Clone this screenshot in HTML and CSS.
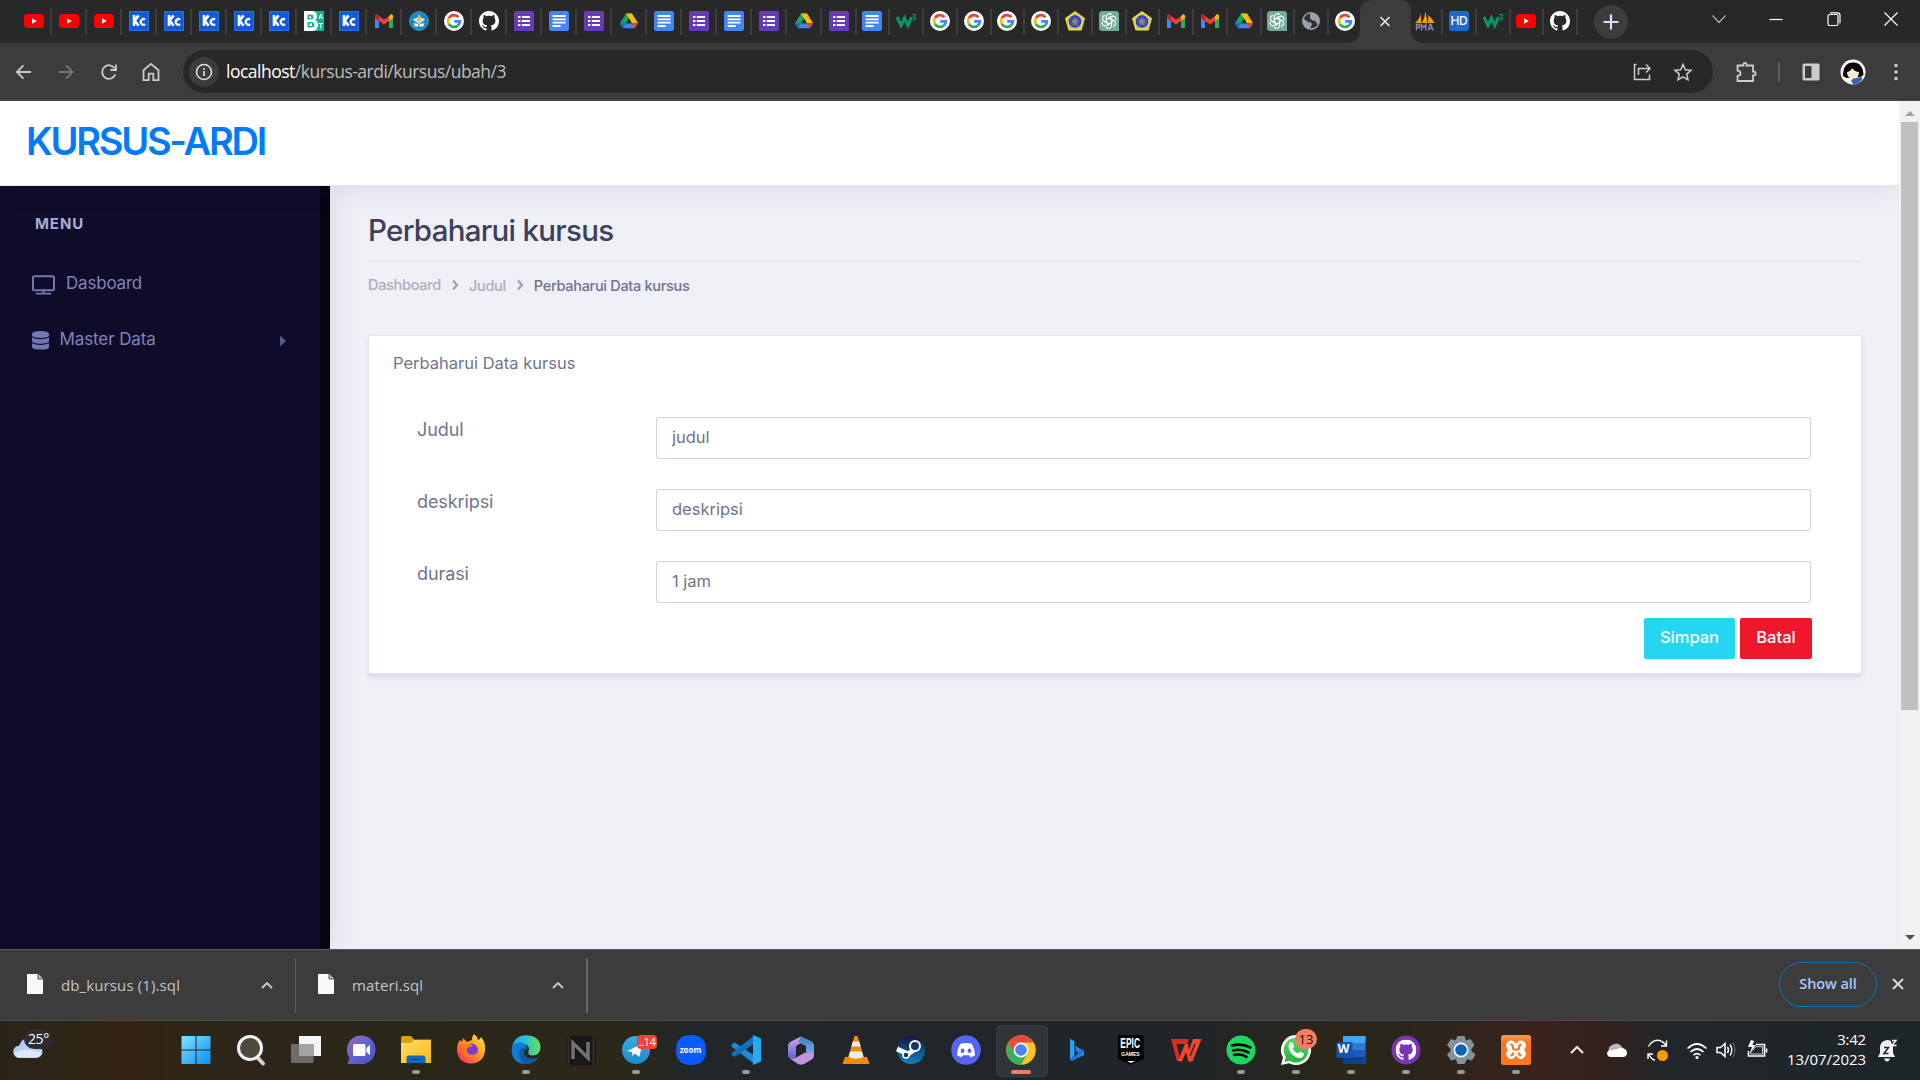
FILE: index.html
```html
<!DOCTYPE html>
<html lang="id">
<head>
<meta charset="utf-8">
<title>Kursus Ardi</title>
<link rel="stylesheet" href="styles.css">
</head>
<body>
<svg class="defs" aria-hidden="true">
  <defs>
    <linearGradient id="gWin" x1="0" y1="0" x2="1" y2="1"><stop offset="0" stop-color="#7fe3ff"/><stop offset="1" stop-color="#0a8ff5"/></linearGradient>
    <linearGradient id="gChat" x1="0" y1="0" x2="1" y2="1"><stop offset="0" stop-color="#9a6cb0"/><stop offset=".5" stop-color="#5f62d0"/><stop offset="1" stop-color="#5054c4"/></linearGradient>
    <linearGradient id="gFolder" x1="0" y1="0" x2="1" y2="1"><stop offset="0" stop-color="#ffdc6e"/><stop offset="1" stop-color="#fdb90e"/></linearGradient>
    <linearGradient id="gFox" x1="1" y1="0" x2="0" y2="1"><stop offset="0" stop-color="#fff14a"/><stop offset=".45" stop-color="#ff9a1c"/><stop offset="1" stop-color="#ff1f6b"/></linearGradient>
    <linearGradient id="gEdge" x1="0" y1="0" x2="1" y2="0"><stop offset="0" stop-color="#1fa0e8"/><stop offset=".5" stop-color="#2cc3d2"/><stop offset="1" stop-color="#6be04b"/></linearGradient>
    <linearGradient id="g365a" x1="0" y1="0" x2="0" y2="1"><stop offset="0" stop-color="#d8a5e8"/><stop offset="1" stop-color="#5a62c8"/></linearGradient>
    <linearGradient id="g365b" x1="0" y1="0" x2="0" y2="1"><stop offset="0" stop-color="#3d7fb8"/><stop offset="1" stop-color="#7db2f0"/></linearGradient>
    <linearGradient id="gSteam" x1="0" y1="0" x2="0" y2="1"><stop offset="0" stop-color="#14143c"/><stop offset="1" stop-color="#1083bf"/></linearGradient>
    <linearGradient id="gBing" x1="0" y1="0" x2="1" y2="1"><stop offset="0" stop-color="#35a4f5"/><stop offset=".6" stop-color="#1d6fe0"/><stop offset="1" stop-color="#43d6e8"/></linearGradient>
    <linearGradient id="gTg" x1="0" y1="0" x2="0" y2="1"><stop offset="0" stop-color="#37aee2"/><stop offset="1" stop-color="#1b8bc8"/></linearGradient>
    <linearGradient id="gXa" x1="0" y1="0" x2="0" y2="1"><stop offset="0" stop-color="#fb9a4c"/><stop offset=".3" stop-color="#f9731a"/><stop offset="1" stop-color="#fb7a24"/></linearGradient>
    <linearGradient id="gWa" x1="0" y1="0" x2="0" y2="1"><stop offset="0" stop-color="#60d66a"/><stop offset="1" stop-color="#22b43a"/></linearGradient>
  </defs>
  <symbol id="yt" viewBox="0 0 20 20"><rect y="3" width="20" height="14" rx="3.6" fill="#f00"/><path d="M8 7.2v5.6l4.8-2.8z" fill="#fff"/></symbol>
  <symbol id="kc" viewBox="0 0 20 20"><rect width="20" height="20" fill="#2a6fe8"/><rect x="1" y="1" width="18" height="18" fill="#0f5bd8"/><path d="M5 4v11M9.6 4.4 5.6 9.6l4 5.2" fill="none" stroke="#fff" stroke-width="2.6"/><path d="M16 8.6a2.6 2.9 0 1 0 0 4.6" fill="none" stroke="#fff" stroke-width="2.3"/></symbol>
  <symbol id="bat" viewBox="0 0 20 20"><rect width="20" height="20" fill="#12b398"/><path d="M0 0h9q4 1 4 5 0 3-2 4 3 1 3 5 0 5-5 6H0z" fill="#fff"/><path d="M3.500 3.500h3.500q2.500 0 2.500 2.500T7 8.500H3.500zM3.500 11h4q3 0 3 2.700t-3 2.800h-4z" fill="#12b398"/><path d="M5.500 5h1.500v2.500H5.500zm0 7.500H8v2.500H5.500z" fill="#fff"/><path d="M15 8l1.700-5L18.400 8M15.500 6.500h2.400M14.800 12.500h4M16.800 12.500v5" fill="none" stroke="#fff"/></symbol>
  <symbol id="gmail" viewBox="0 0 20 20"><path d="M1 5.500V17h4V9.500z" fill="#4285f4"/><path d="M19 5.500V17h-4V9.500z" fill="#34a853"/><path d="M15 5.200V10l4-3V5q0-2.400-2.600-1.600z" fill="#fbbc04"/><path d="M1 5v2l4 3 5 3.600 5-3.600V5l-5 3.800L3.600 3.800Q1 2.500 1 5z" fill="#ea4335"/><path d="M1 5q0-2.500 2.600-1.300L5 5v5L1 7z" fill="#c5221f"/></symbol>
  <symbol id="tut" viewBox="0 0 20 20"><circle cx="10" cy="10" r="9.300" fill="#1487c4" stroke="#3fa0d0"/><path d="M10 3l1.500 3.500L16 8q-1 3-4 3.500L10 13l-2-1.500Q5 11 4 8l4.500-1.500z" fill="#cfe3ee"/><path d="M10 3l1.500 4v3.500h-3V7z" fill="#e2c03a"/><path d="M4.500 12.200l4.500.6 1 .8 1-.8 4.500-.6-1.200 3.300H5.700z" fill="#fff"/><path d="M10 13v3.500" stroke="#1d6fa0"/></symbol>
  <symbol id="goog" viewBox="0 0 20 20"><circle cx="10" cy="10" r="10" fill="#fff"/><g fill="none" stroke-width="2.700"><path d="M14.500 6.200A5.900 5.900 0 0 0 4.900 7.100" stroke="#ea4335"/><path d="M4.900 7.100a5.900 5.900 0 0 0 0 5.900" stroke="#fbbc05"/><path d="M4.900 13a5.900 5.900 0 0 0 9 1.400" stroke="#34a853"/><path d="M13.900 14.400A5.900 5.900 0 0 0 15.900 10.300H10.200" stroke="#4285f4"/></g></symbol>
  <symbol id="gh" viewBox="0 0 16 16"><path fill="currentColor" d="M8 0C3.580 0 0 3.580 0 8c0 3.540 2.290 6.530 5.470 7.590.4.070.55-.17.55-.38 0-.19-.01-.82-.01-1.490-2.010.37-2.530-.49-2.690-.94-.09-.23-.48-.94-.82-1.130-.28-.15-.68-.52-.01-.53.63-.01 1.080.58 1.230.82.720 1.210 1.870.87 2.330.66.070-.52.280-.87.510-1.070-1.780-.2-3.640-.89-3.640-3.950 0-.87.310-1.590.820-2.150-.08-.2-.36-1.020.080-2.120 0 0 .67-.21 2.200.820.640-.18 1.320-.27 2-.27s1.360.090 2 .270c1.530-1.040 2.200-.82 2.200-.82.440 1.100.160 1.920.080 2.120.510.560.820 1.270.820 2.150 0 3.070-1.870 3.750-3.650 3.950.290.250.540.730.540 1.480 0 1.070-.01 1.930-.01 2.200 0 .21.150.46.550.38A8.013 8.013 0 0 0 16 8c0-4.420-3.580-8-8-8z"/></symbol>
  <symbol id="forms" viewBox="0 0 20 20"><rect width="20" height="20" rx="1.500" fill="#673ab7"/><path d="M4 6h2.400M4 10h2.400M4 14h2.400M7.800 6H16M7.800 10H16M7.800 14H16" stroke="#fff" stroke-width="1.800"/></symbol>
  <symbol id="docs" viewBox="0 0 20 20"><rect width="20" height="20" rx="2.200" fill="#4285f4"/><path d="M3.600 5h13M3.600 8.400h13M3.600 11.700h13M3.600 15h8" stroke="#fff" stroke-width="1.800"/></symbol>
  <symbol id="drive" viewBox="0 0 20 20"><path d="M7 2.500h6L7 13l-3 4-3-4.800z" fill="#11a861"/><path d="M7 2.500h6L10 8z" fill="#188038"/><path d="M7 2.500h6l6 9.700h-6.300z" fill="#ffba00"/><path d="M1 12.200h6L4 17.300z" fill="#1967d2"/><path d="M7 12.200h6l3 5.100H4z" fill="#4285f4"/><path d="M12.700 12.200H19l-3 5.100z" fill="#ea4335"/><path d="M10 7.400l2.800 4.800H7.200z" fill="#282828"/></symbol>
  <symbol id="w3" viewBox="0 0 20 20"><path d="M1 6l4 8.500L8.500 7l3.300 7.500L15.500 6" fill="none" stroke="#059862" stroke-width="3"/><path d="M16.500 3.500h3L17.800 6q2 0 1.700 1.700T16.500 9" fill="none" stroke="#059862" stroke-width="1.100"/></symbol>
  <symbol id="badge" viewBox="0 0 20 20"><path d="M10 0l10 7.300L16.500 19.500h-13L0 7.300z" fill="#ece21c"/><path d="M10 2.300l8 5.800-2.800 9.400H4.800L2 8.100z" fill="#b4b6c6"/><circle cx="10" cy="10.500" r="5.400" fill="#8f94ca" stroke="#1c2ad0" stroke-width="1.500"/><circle cx="10" cy="10.500" r="3.600" fill="#8b8377" stroke="#2c3f9a" stroke-width="1.200"/><path d="M7.500 13.500h5" stroke="#3c8f4a" stroke-width="1.600"/></symbol>
  <symbol id="gpt" viewBox="0 0 20 20"><path d="M3.500 0h13Q20 0 20 3.500V20H3.500Q0 20 0 16.500v-13Q0 0 3.500 0z" fill="#74aa9c"/><g fill="none" stroke="#fff" stroke-width="1.100"><g id="petal"><path d="M7.400 11.500V5.800a3.100 3.100 0 0 1 5.500-2"/><path d="M7.600 8.200l4.600-2.600"/></g><use href="#petal" transform="rotate(60 10 10)"/><use href="#petal" transform="rotate(120 10 10)"/><use href="#petal" transform="rotate(180 10 10)"/><use href="#petal" transform="rotate(240 10 10)"/><use href="#petal" transform="rotate(300 10 10)"/></g></symbol>
  <symbol id="globe" viewBox="0 0 20 20"><circle cx="10" cy="10" r="9" fill="#9aa0a6"/><path d="M9 2.600Q4 3.500 3 8l4 3 3 .5 1 2-2 3.700q5 .8 7.500-3.700l-2-3.500-4-1-1-2 3-1.500z" fill="#303134"/><path d="M9 3l4 1-1 2.500L9 8z" fill="#9aa0a6"/></symbol>
  <symbol id="pma" viewBox="0 0 20 20"><path d="M0 12Q5 8 5.500 2L6.500 12zM7 12Q10 6 10.500 0L12.500 12zM13 12l.5-8q4 4 6 8z" fill="#f89c0e"/><path d="M1.500 19.500v-6h3v3h-3M6.500 19.500v-6l2.200 3 2.200-3v6M13.500 19.500l1.500-6h1l2 6M14 17.500h3" fill="none" stroke="#8286b0" stroke-width="1.400"/></symbol>
  <symbol id="sep" viewBox="0 0 12 12"><path d="M4 1.500l4 4.500-4 4.500" fill="none" stroke="currentColor" stroke-width="2.300"/></symbol>
</svg>

<div class="tabstrip">
  <div class="tab"><svg><use href="#yt"/></svg></div><div class="tab"><svg><use href="#yt"/></svg></div><div class="tab"><svg><use href="#yt"/></svg></div>
  <div class="tab"><svg><use href="#kc"/></svg></div><div class="tab"><svg><use href="#kc"/></svg></div><div class="tab"><svg><use href="#kc"/></svg></div><div class="tab"><svg><use href="#kc"/></svg></div><div class="tab"><svg><use href="#kc"/></svg></div>
  <div class="tab"><svg><use href="#bat"/></svg></div><div class="tab"><svg><use href="#kc"/></svg></div><div class="tab"><svg><use href="#gmail"/></svg></div><div class="tab"><svg><use href="#tut"/></svg></div>
  <div class="tab"><svg><use href="#goog"/></svg></div><div class="tab"><svg><use href="#gh"/></svg></div><div class="tab"><svg><use href="#forms"/></svg></div><div class="tab"><svg><use href="#docs"/></svg></div>
  <div class="tab"><svg><use href="#forms"/></svg></div><div class="tab"><svg><use href="#drive"/></svg></div><div class="tab"><svg><use href="#docs"/></svg></div><div class="tab"><svg><use href="#forms"/></svg></div>
  <div class="tab"><svg><use href="#docs"/></svg></div><div class="tab"><svg><use href="#forms"/></svg></div><div class="tab"><svg><use href="#drive"/></svg></div><div class="tab"><svg><use href="#forms"/></svg></div>
  <div class="tab narrow"><svg><use href="#docs"/></svg></div><div class="tab narrow"><svg><use href="#w3"/></svg></div>
  <div class="tab narrow"><svg><use href="#goog"/></svg></div><div class="tab narrow"><svg><use href="#goog"/></svg></div><div class="tab narrow"><svg><use href="#goog"/></svg></div><div class="tab narrow"><svg><use href="#goog"/></svg></div>
  <div class="tab narrow"><svg><use href="#badge"/></svg></div><div class="tab narrow"><svg><use href="#gpt"/></svg></div><div class="tab narrow"><svg><use href="#badge"/></svg></div>
  <div class="tab narrow"><svg><use href="#gmail"/></svg></div><div class="tab narrow"><svg><use href="#gmail"/></svg></div><div class="tab narrow"><svg><use href="#drive"/></svg></div>
  <div class="tab narrow"><svg><use href="#gpt"/></svg></div><div class="tab narrow"><svg><use href="#globe"/></svg></div><div class="tab narrow bare"><svg><use href="#goog"/></svg></div>
  <div class="tab-active"><svg class="tab-shape" viewBox="0 0 82 43"><path d="M0 43q15 0 15-13V11Q15 0 27 0h28q11 0 11 11v19q0 13 16 13z" fill="#3c3c3c"/><path d="M35.500 17l9 9M44.500 17l-9 9" stroke="#e8e8e8" stroke-width="1.700"/></svg></div>
  <div class="tab narrow"><svg><use href="#pma"/></svg></div>
  <div class="tab narrow"><span class="hd">HD</span></div>
  <div class="tab narrow"><svg><use href="#w3"/></svg></div><div class="tab narrow"><svg><use href="#yt"/></svg></div><div class="tab narrow"><svg><use href="#gh"/></svg></div>
  <div class="newtab"><svg viewBox="0 0 34 34"><path d="M17 9.500v15M9.500 17h15" stroke="#d6e2fb" stroke-width="2.200"/></svg></div>
  <div class="wincontrols">
    <svg viewBox="0 0 20 20"><path d="M3.500 6.500l6.500 7 6.500-7" fill="none" stroke="#ddd" stroke-width="1.100"/></svg>
    <svg viewBox="0 0 20 20"><path d="M3.500 10.500h13" stroke="#fff" stroke-width="1.200"/></svg>
    <svg viewBox="0 0 20 20"><g fill="none" stroke="#fff" stroke-width="1.200"><rect x="4" y="5.500" width="10" height="11" rx="1.500"/><path d="M6 3.800h7.500q2.500 0 2.500 2.500v8"/></g></svg>
    <svg viewBox="0 0 20 20"><path d="M3.500 3.500l13 13M16.500 3.500l-13 13" stroke="#fff" stroke-width="1.200"/></svg>
  </div>
</div>

<div class="toolbar">
  <div class="navbtns">
    <svg viewBox="0 0 20 20" class="lit"><path d="M18 10H4M10.500 3.300 3.800 10l6.700 6.700"/></svg>
    <svg viewBox="0 0 20 20" class="dim"><path d="M2.500 10h14M10 3.300l6.700 6.700-6.700 6.700"/></svg>
    <svg viewBox="0 0 20 20" class="lit"><path d="M16.300 12.500a6.800 6.800 0 1 1-.5-6M17 2.500V8h-5.500"/></svg>
    <svg viewBox="0 0 20 20" class="lit"><path d="M2.500 8.200 10 1.900l7.500 6.300v10h-5.200v-6.500H7.700v6.500H2.500z"/></svg>
  </div>
  <div class="omnibox">
    <span class="info"><svg viewBox="0 0 20 20"><circle cx="10" cy="10" r="7.500" fill="none" stroke="#ddd" stroke-width="1.600"/><path d="M10 9v5M10 6v1.800" stroke="#ddd" stroke-width="1.700"/></svg></span>
    <span class="url"><b>localhost</b>/kursus-ardi/kursus/ubah/3</span>
    <span class="omni-actions">
      <svg viewBox="0 0 20 20" class="lit"><path d="M4.500 2.500H2.500v15h15v-5M6.500 13V6.500h11M14 2.500l4 4-4 4" stroke-width="1.500"/></svg>
      <svg viewBox="0 0 20 20" class="lit"><path d="M10 2.500l2.300 5.300 5.700.5-4.300 3.800 1.300 5.700-5-3-5 3 1.300-5.700L2 8.300l5.700-.5z" stroke-width="1.500"/></svg>
    </span>
  </div>
  <div class="toolicons">
    <svg viewBox="0 0 22 22" class="lit puzzle"><path d="M2.500 4.500h6q-.5-2.700 1.500-2.700t1.500 2.700h6.500v6q2.700 0 2.700 2t-2.700 2v5.500H2.500v-5q3-.3 3-2.700t-3-2.700z"/></svg>
    <i class="tooldiv"></i>
    <svg viewBox="0 0 20 20" class="panel"><rect x="1.500" y="1.500" width="17" height="17" rx="1.500" fill="#ccc"/><path d="M4 4h6.500v12H4z" fill="#3c3c3c"/></svg>
    <svg viewBox="0 0 26 26" class="avatar"><circle cx="13" cy="13" r="12.500" fill="#fff"/><path d="M3 17q0-13.500 10-13.500T23.500 16l-3 2-14 1z" fill="#050505"/><path d="M7 13q4-1 5-4 3 4 7 4 0 6.500-6 6.500T7 13z" fill="#f3ead2"/><path d="M13 19.500q5 0 8-2l1.500 2.500Q19 25 13.500 25.500L11 22z" fill="#3c63b0"/></svg>
    <svg viewBox="0 0 20 20" class="dots"><path d="M10 3.500v.01M10 10v.01M10 16.500v.01" stroke="#ccc" stroke-width="3.600" stroke-linecap="round"/></svg>
  </div>
</div>

<div class="viewport">
  <div class="site">
    <header class="header"><a class="brand">KURSUS-ARDI</a></header>
    <div class="site-body">
      <nav class="sidebar">
        <div class="menu-label">MENU</div>
        <a class="menu-item das"><svg viewBox="0 0 23 20" class="ic-tv"><rect x="1" y="1.200" width="21" height="14" rx="1.500" fill="none" stroke="#7476b0" stroke-width="2"/><path d="M11.500 15v3M4.500 18.600h14" stroke="#7476b0" stroke-width="1.900" stroke-linecap="round"/></svg><span>Dasboard</span></a>
        <a class="menu-item"><svg viewBox="0 0 17 19" class="ic-db"><g fill="#7476b0"><path d="M0 3q0-3 8.500-3T17 3v1.300q0 2.700-8.500 2.700T0 4.300z"/><path d="M0 6.500q3 1.800 8.500 1.800T17 6.500v3.600q0 2.700-8.500 2.700T0 10.100z"/><path d="M0 12.300q3 1.800 8.500 1.800t8.500-1.800v3.600q0 2.700-8.500 2.700T0 15.900z"/></g></svg><span>Master Data</span><svg viewBox="0 0 6 12" class="caret"><path d="M0 .5v11L6 6z" fill="#585a90"/></svg></a>
      </nav>
      <main class="content">
        <h2 class="title">Perbaharui kursus</h2>
        <div class="crumbs"><span>Dashboard</span><svg><use href="#sep"/></svg><span class="step">Judul</span><svg><use href="#sep"/></svg><span class="step current">Perbaharui Data kursus</span></div>
        <section class="card">
          <h5 class="card-title">Perbaharui Data kursus</h5>
          <form class="form">
            <div class="row"><label>Judul</label><input type="text" value="judul"></div>
            <div class="row"><label>deskripsi</label><input type="text" value="deskripsi"></div>
            <div class="row"><label>durasi</label><input type="text" value="1 jam"></div>
            <div class="actions"><button type="button" class="btn save">Simpan</button><button type="button" class="btn cancel">Batal</button></div>
          </form>
        </section>
      </main>
    </div>
  </div>
  <div class="scrollbar"><i class="arrow up"></i><i class="thumb"></i><i class="arrow down"></i></div>
</div>

<div class="downloads">
  <div class="dl"><svg class="file" viewBox="0 0 16 20"><path d="M0 0h11l5 5v15H0z" fill="#fafafa"/><path d="M11 0v5h5" fill="#bbb" stroke="#555"/></svg><span>db_kursus (1).sql</span><svg class="chev" viewBox="0 0 12 8"><path d="M1 7l5-5 5 5"/></svg></div>
  <div class="dl last"><svg class="file" viewBox="0 0 16 20"><path d="M0 0h11l5 5v15H0z" fill="#fafafa"/><path d="M11 0v5h5" fill="#bbb" stroke="#555"/></svg><span>materi.sql</span><svg class="chev" viewBox="0 0 12 8"><path d="M1 7l5-5 5 5"/></svg></div>
  <button class="showall">Show all</button>
  <svg class="closedl" viewBox="0 0 12 12"><path d="M1 1l10 10M11 1L1 11" stroke="#ddd" stroke-width="1.900"/></svg>
</div>

<div class="taskbar">
  <div class="weather"><svg viewBox="0 0 32 24"><path d="M7 23a6.500 6.500 0 0 1-.5-13Q9 2 16 2q8 0 9 8a6.500 6.500 0 0 1 0 13z" fill="#b5ccf6"/><path d="M7 23a6.500 6.500 0 0 1-6-5q7-5 15-4t14 3q-1 6-6 6z" fill="#dce7fc"/></svg><span class="temp">25°</span></div>
  <div class="apps">
    <div class="app"><svg viewBox="0 0 36 36"><path d="M3.500 4h14v13.500h-14zM18.500 4h14v13.500h-14zM3.500 18.500h14V32h-14zM18.500 18.500h14V32h-14z" fill="url(#gWin)"/></svg></div>
    <div class="app"><svg viewBox="0 0 36 36"><path d="M24 25l6 6.500" stroke="#cfd3da" stroke-width="4" stroke-linecap="round"/><circle cx="17" cy="16" r="11.500" fill="#4d4a3d" stroke="#f2f2f2" stroke-width="3"/></svg></div>
    <div class="app"><svg viewBox="0 0 36 36"><path d="M11 4h22v20H11z" fill="#f5f5f5"/><path d="M3 12h22.500v19H3z" fill="#6c6c6c"/><path d="M11 12h14.500v12H11z" fill="#a4a4a4"/></svg></div>
    <div class="app"><svg viewBox="0 0 36 36"><path d="M18 3.500a14 14.300 0 1 1-1 28.500H4.500l2-6A14 14.300 0 0 1 18 3.500z" fill="url(#gChat)"/><rect x="10" y="12" width="12.500" height="12" rx="1.500" fill="#fff"/><path d="M23.500 16l3.500-3.200v10.400L23.500 20z" fill="#fff"/></svg></div>
    <div class="app run"><svg viewBox="0 0 36 36"><path d="M3 6q0-2 2-2h8l3 3.500h17V12H3z" fill="#dba114"/><path d="M3 11h10l3-3h17v23H3z" fill="url(#gFolder)"/><path d="M8.500 31v-5q0-2.500 2.500-2.500h14q2.500 0 2.500 2.500v5z" fill="#0e6cc0"/><path d="M12.500 27.500h11" stroke="#0a4c8c"/></svg></div>
    <div class="app"><svg viewBox="0 0 36 36"><path d="M19 8q0-4 2-6 3 2 4 6 2 0 3-3 5 6 4 13-1 13-14 13.500Q5 31 4 18 4 11 7 8l2 2 1-4 4 4z" fill="url(#gFox)"/><circle cx="18.500" cy="18" r="6.500" fill="#7a3cd8"/><path d="M8 15q5-4 9-3l3 2-6 2q-1 4 2 6 4 2 8-1-2 5-8 5-8-2-8-11z" fill="#ff7a1c"/></svg></div>
    <div class="app run"><svg viewBox="0 0 36 36"><path d="M4 16Q6 3.200 18.500 3.200 32.500 4 32.500 16q-1 8-9 7.500-4-.5-3-4 2-6-4-7.500Q9 11 4 16z" fill="url(#gEdge)"/><path d="M3.500 19Q4 10.500 12 10.500q7 .5 7 7-3-1-3.500 3 0 7 9 8.500-3 3-8 3Q4.500 31 3.500 19z" fill="#0f7bd2"/><path d="M11 22q1-7 6-7 1.500 0 2 2-3 0-3 3 1 7 9 6.500 3 0 6-1.700Q26 33 18 32.300 11 30 11 22z" fill="#0c59a4"/></svg></div>
    <div class="app"><svg viewBox="0 0 36 36"><rect x="3" y="3.500" width="30" height="30" rx="4" fill="#181818"/><path d="M5.500 4v29M30.500 4v29" stroke="#303030" stroke-width="2"/><path d="M10 27V11l15 15V10" fill="none" stroke="#747474" stroke-width="3.400"/></svg></div>
    <div class="app run"><svg viewBox="0 0 36 36"><circle cx="18" cy="18" r="14" fill="url(#gTg)"/><path d="M9 19l15-7-2.500 13-4.500-3.500-2.500 2.500-.5-4z" fill="#fff"/></svg><span class="count red">..14</span></div>
    <div class="app"><svg viewBox="0 0 36 36"><path d="M18 3q15 0 15 15T18 33 3 18 18 3z" fill="#0b5cff"/></svg><span class="zoomword">zoom</span></div>
    <div class="app run"><svg viewBox="0 0 36 36"><path d="M3.500 12.500l3-2.300L27 24v8.500L3.500 14.500z" fill="#1c8ad4"/><path d="M3.500 22.500l3 2.500L27 11V3L3.500 21z" fill="#0f72b8"/><path d="M25 3l8 3.500v23L25 33z" fill="#29a9f2"/></svg></div>
    <div class="app"><svg viewBox="0 0 36 36"><path d="M18 4.500 8 9.500Q5 11 5 14v11l6 2.500q2-1 2-3.500V14l8-5z" fill="url(#g365a)"/><path d="M18 4.500 28 9q3 1.500 3 5v10l-8-4v-6l-8-4z" fill="url(#g365b)"/><path d="M31 21v3q0 2.500-3 4l-7 4q-3 1.500-6 0L6 26q5 2 8-1l8-4.500z" fill="#c294de"/></svg></div>
    <div class="app"><svg viewBox="0 0 36 36"><path d="M7 25h22l2.500 7h-27z" fill="#f58a0a"/><path d="M16.500 4h3L26 26q-8 4.500-16 0z" fill="#f58a0a"/><path d="M14.800 9.500h6.500l1.500 5h-9.500zM12 19.500h12l1.500 5.500q-7.500 3.500-15 0z" fill="#ececec"/></svg></div>
    <div class="app"><svg viewBox="0 0 36 36"><circle cx="18" cy="18" r="14" fill="url(#gSteam)"/><path d="M4 17l11 5 7-5" stroke="#fff" stroke-width="5" fill="none"/><circle cx="22" cy="14" r="5" fill="#16345f" stroke="#fff" stroke-width="2"/><circle cx="13" cy="23" r="3" fill="#16345f" stroke="#fff" stroke-width="1.500"/></svg></div>
    <div class="app"><svg viewBox="0 0 36 36"><circle cx="18" cy="18" r="14.800" fill="#5865f2"/><path d="M12.500 11.800q5.500-1.500 11 0Q27 17 27 23.300q-2.500 1.700-4.600 2l-1.200-2h-6.400l-1.200 2q-2.100-.3-4.600-2 0-6.300 3.500-11.500z" fill="#fff"/><ellipse cx="14.500" cy="18.800" rx="1.900" ry="2.200" fill="#5865f2"/><ellipse cx="21.500" cy="18.800" rx="1.900" ry="2.200" fill="#5865f2"/></svg></div>
    <div class="app run active"><svg viewBox="0 0 36 36"><circle cx="18" cy="18" r="14.800" fill="#fbc116"/><path d="M5.200 10.600A14.800 14.800 0 0 1 30.800 10.600H18z" fill="#e33b2e"/><path d="M5.200 10.600A14.800 14.800 0 0 0 18 32.800l6.400-11.100-6.400 3.700-6.400-3.700z" fill="#2da94f"/><path d="M5.200 10.600 11.600 21.700 12 14 18 10.600z" fill="#e33b2e"/><circle cx="18" cy="18" r="7.400" fill="#fff"/><circle cx="18" cy="18" r="5.800" fill="#3b7ded"/></svg></div>
    <div class="app"><svg viewBox="0 0 36 36"><path d="M12 7l4.500 2v14.500L12 28z" fill="#2f9df2"/><path d="M17 14l9 4.500v4.500L14 29l-2-1 4.500-4 4-3-2-1z" fill="url(#gBing)"/></svg></div>
    <div class="app"><svg viewBox="0 0 36 36"><path d="M5 5q0-2 2-2h22q2 0 2 2v22L18 33 5 27z" fill="#050505"/><path d="M14 29h8l-4 2z" fill="#fff"/></svg><span class="epic"><b>EPIC</b>GAMES</span></div>
    <div class="app"><svg viewBox="0 0 36 36"><path d="M3 7h18l-2 5H8.500l4 17H9z" fill="#e5281c"/><path d="M10 29l7-17h3l1 6 4-11h8.500l-9 22.500h-4L18 20l-4 9.500z" fill="#f8452a"/><path d="M22 24l5-12" stroke="#20262a" stroke-width="1.500"/></svg></div>
    <div class="app run"><svg viewBox="0 0 36 36"><circle cx="18" cy="18" r="14.500" fill="#1ed760"/><path d="M9 13.500q9.500-2.500 18.500 2M10 18.500q8-2.200 15.500 2M11 23q6.500-1.800 12.500 1.800" fill="none" stroke="#0b0b0b" stroke-width="2.600" stroke-linecap="round"/></svg></div>
    <div class="app run"><svg viewBox="0 0 36 36"><path d="M18 3a15 15 0 1 1-7 28.200L3 33l2-7.500A15 15 0 0 1 18 3z" fill="#fff"/><path d="M18 5.500a12.500 12.500 0 1 1-6.500 23.200L6.500 30l1.300-5A12.500 12.500 0 0 1 18 5.500z" fill="url(#gWa)"/><path d="M12 10.500h2.500l1.700 4-1.500 2q2 4 5.500 5l1.800-2 4 2q-.5 5-5 4.500Q12 24 10.500 15q0-3 1.500-4.500z" fill="#fff"/></svg><span class="count coral">13</span></div>
    <div class="app run"><svg viewBox="0 0 36 36"><path d="M10 4h22.500v28H10z" fill="#2b7cd3"/><path d="M10 4h22.500v7H10z" fill="#41a5ee"/><path d="M10 18h22.500v7H10z" fill="#185abd"/><path d="M10 25h22.500v7H10z" fill="#103f91"/><rect x="3.500" y="10" width="16" height="16" rx="1.500" fill="#1553b0"/></svg><span class="word">W</span></div>
    <div class="app run"><svg viewBox="0 0 36 36"><circle cx="18" cy="18" r="14.500" fill="#7a34b4"/><svg x="7.500" y="7.500" width="21" height="21"><use href="#gh"/></svg></svg></div>
    <div class="app run"><svg viewBox="0 0 36 36"><path d="M14.500 4h7l1.500 4.500 4.500-1.500 4 6-3 4v2l4 3.500-3.500 6-5-1.200L21.500 32h-7L13 27.300l-5 1.200-4-6L7.500 19v-2L4 13l4-6 4.500 1.500z" fill="#84909a"/><circle cx="18" cy="18" r="7.500" fill="#f4f6f8"/><circle cx="18" cy="18" r="5.800" fill="#0b63b5"/></svg></div>
    <div class="app run"><svg viewBox="0 0 36 36"><rect x="3" y="3" width="30" height="30" rx="2.500" fill="url(#gXa)"/><path d="M10 9.500q5-3 8 2.500 3-5.500 8-2.500 4 4 0 8 4 5-1 9-4 2-7-3-3 5-7 3-5-4-1-9-4-4 0-8z" fill="#fff"/><path d="M12.500 12.500q3 0 2.500 5M23.500 12.500q-3 0-2.500 5M15 17.500h6M12.500 23.500q3 0 2.500-3M23.500 23.500q-3 0-2.500-3" fill="none" stroke="#f9731a" stroke-width="2.200"/></svg></div>
  </div>
  <div class="tray">
    <svg viewBox="0 0 24 24" class="t1"><path d="M6 15l6-6 6 6" fill="none" stroke="#eee" stroke-width="2"/></svg>
    <svg viewBox="0 0 24 24" class="t2"><path d="M6 16a5 5 0 0 1 1-9q6-4 10 2l4 4-9 6z" fill="#b9b9b9"/><path d="M5 19q-3-1-3-4 1-3.500 5-3l9-2q6 .5 6 5-.5 4-4 4z" fill="#fff"/></svg>
    <svg viewBox="0 0 24 24" class="t3"><path d="M3.500 8.500Q7 2 13 2.200 19 3 21 8M21.500 2.500V8H16M3 21v-5h5M4 17q2 4 6 5.500" fill="none" stroke="#fff" stroke-width="1.400"/><circle cx="17.500" cy="17.500" r="5.500" fill="#ff9a0a"/></svg>
    <svg viewBox="0 0 24 24" class="t4"><path d="M2.500 10.500q9.500-9 19 0M5.500 14q6.500-6 13 0M8.500 17.200q3.500-3 7 0" fill="none" stroke="#fff" stroke-width="1.700"/><circle cx="12" cy="19.500" r="1.600" fill="#fff"/></svg>
    <svg viewBox="0 0 24 24" class="t5"><path d="M3 9.500h3.500L11 5.500v13l-4.500-4H3z" fill="none" stroke="#fff" stroke-width="1.500"/><path d="M13.500 9q2 3 0 6M16 6.500q3.500 5.500 0 11" fill="none" stroke="#fff" stroke-width="1.400"/><path d="M18.500 4.500q5 7.500 0 15" fill="none" stroke="#777"/></svg>
    <svg viewBox="0 0 24 24" class="t6"><path d="M11 6.500h8.500v11.500H3.500v-5" fill="none" stroke="#fff" stroke-width="1.600"/><path d="M11 8.700h6.500v7.300H5.700V14z" fill="none" stroke="#fff" stroke-width=".8"/><path d="M6 2l-3 7h4l-2 6 6-8H7.500L9 3z" fill="#fff"/><path d="M21.500 10.500v4" stroke="#fff" stroke-width="1.600"/></svg>
    <div class="clock"><span>3:42</span><span class="date">13/07/2023</span></div>
    <svg viewBox="0 0 24 24" class="t7"><path d="M11 2q-7 1-7 8v5l-2 4h17l-2-4V3z" fill="#f4f4f4"/><path d="M8 20.500h6q-1 3-3 3t-3-3z" fill="#f4f4f4"/><path d="M14 1h8v8h-5z" fill="#20262a"/><path d="M16 2.500h4L16 7.500h4.500" fill="none" stroke="#fff" stroke-width="1.400"/><path d="M8 9.500h4.500L8 15.500h4.500" fill="none" stroke="#222" stroke-width="1.500"/></svg>
  </div>
</div>
</body>
</html>
```
FILE: styles.css
```css
* { box-sizing: border-box; }
body { margin: 0; width: 1920px; height: 1080px; overflow: hidden; display: flex; flex-direction: column; font-family: Inter, "Liberation Sans", sans-serif; background: #3c3c3c; }
.defs { position: absolute; width: 0; height: 0; }
svg { display: block; flex: none; }

/* tab strip */
.tabstrip { height: 43px; flex: none; display: flex; align-items: center; padding-left: 16.5px; background: #282828; color: #fff; }
.tab { width: 35px; height: 26px; flex: none; display: flex; align-items: center; justify-content: center; border-right: 2px solid #3d3d3d; padding: 0 0 1px 1.5px; }
.tab svg { width: 20px; height: 20px; }
.narrow { width: 33.75px; padding-left: 0; }
.bare { border-color: transparent; }
.hd { width: 20px; height: 20px; border-radius: 3px; background: #1c68d4; font: 500 12px/20px Inter, sans-serif; text-align: center; letter-spacing: -.3px; }
.tab-active { width: 46.500px; height: 43px; flex: none; display: flex; justify-content: center; }
.tab-shape { width: 82px; height: 43px; }
.newtab { width: 34px; height: 34px; flex: none; border-radius: 50%; background: #3c3c3c; margin-left: 16px; }
.wincontrols { display: flex; gap: 37.300px; margin: -6px 19px 0 auto; }
.wincontrols svg { width: 20px; height: 20px; }

/* toolbar */
.toolbar { height: 58px; flex: none; display: flex; align-items: center; background: #3c3c3c; padding: 0 12px 0 13px; border-bottom: 1px solid #474747; }
.navbtns { display: flex; gap: 22.800px; width: 170px; }
.navbtns svg { width: 20px; height: 20px; }
.lit, .dim { fill: none; stroke: #ccc; stroke-width: 1.800; }
.dim { stroke: #777; }
.omnibox { width: 1530px; height: 43px; border-radius: 22px; background: #282828; display: flex; align-items: center; padding: 0 20px 0 6px; }
.info { width: 30px; height: 30px; border-radius: 50%; background: #3c3c3c; display: flex; align-items: center; justify-content: center; }
.info svg { width: 20px; height: 20px; }
.url { font: 17.500px/24px "Open Sans", sans-serif; color: #bdbdbd; margin: -2px 0 0 7px; letter-spacing: -.5px; }
.url b { font-weight: 400; color: #fff; }
.omni-actions { margin-left: auto; display: flex; gap: 21px; }
.omni-actions svg { width: 20px; height: 20px; }
.toolicons { flex: 1; display: flex; align-items: center; }
.puzzle { width: 22px; height: 22px; margin-left: 22px; }
.tooldiv { width: 2px; height: 20px; background: #5c5c5c; margin: 0 21px 0 21px; }
.panel { width: 20px; height: 20px; }
.avatar { width: 26px; height: 26px; margin-left: 19px; }
.dots { width: 20px; height: 20px; margin-left: 20px; }

/* page */
.viewport { height: 848px; flex: none; display: flex; background: #efeff6; }
.site { width: 1899px; display: flex; flex-direction: column; overflow: hidden; }
.header { height: 85px; flex: none; background: #fff; border-bottom: 1px solid #e6e6f2; box-shadow: 0 0 28px rgba(82, 63, 105, .13); padding: 20px 0 0 26px; position: relative; z-index: 2; }
.brand { font-size: 38px; line-height: 40px; font-weight: 600; color: #007bff; letter-spacing: -2.250px; }
.site-body { flex: 1; display: flex; }
.sidebar { width: 330px; background: #0e0c28; border-right: 10px solid #06040f; box-shadow: 0 0 28px rgba(82, 63, 105, .13); position: relative; }
.menu-label { height: 69px; padding: 28px 0 0 35px; font-size: 15px; line-height: 20px; font-weight: 700; color: #a9abdc; letter-spacing: .9px; }
.menu-item { height: 56px; display: flex; align-items: center; padding: 0 34px 0 32px; font-size: 17px; line-height: 24px; color: #8183bd; letter-spacing: -.1px; }
.das { letter-spacing: -.2px; }
.ic-tv { width: 23px; height: 20px; margin: 4px 11px 0 0; }
.ic-db { width: 17px; height: 19px; margin: 2px 10.500px 0 0; }
.caret { width: 6px; height: 12px; margin: 3px 0 0 auto; }
.content { flex: 1; padding: 26px 37px 0 38px; }
.title { margin: 0; font-size: 29.500px; line-height: 36px; font-weight: 500; color: #3d405c; padding-bottom: 13px; border-bottom: 1px solid #e1e1eb; box-sizing: content-box; letter-spacing: -.7px; }
.crumbs { display: flex; align-items: center; margin: 13px 0 40px; font-size: 14.500px; line-height: 20px; font-weight: 500; color: #adadbe; letter-spacing: -.3px; }
.crumbs svg { width: 12px; height: 12px; margin: 0 8px; color: #a0a0b4; }
.step { padding-top: 1px; margin-bottom: -1px; }
.current { color: #71748d; }
.card { width: 1494px; height: 339px; background: #fff; border: 1px solid #e6e6f2; border-radius: 3px; box-shadow: 0 3px 4px rgba(175, 175, 215, .35); padding: 14.500px 49px 0 24px; }
.card-title { margin: 0 0 42.500px; font-size: 16.500px; line-height: 24px; font-weight: 400; color: #71748d; }
.form { padding-left: 24px; display: flex; flex-direction: column; gap: 30px; }
.row { display: grid; grid-template-columns: 239px 1155px; height: 42px; }
.row label { font-size: 18px; line-height: 24px; color: #71748d; padding-top: 1px; letter-spacing: -.1px; }
.row input { border: 1px solid #d2d2e4; border-radius: 2px; background: #fff; padding: 0 15px 2px; font: 16.500px/24px Inter, sans-serif; color: #71748d; }
.actions { display: flex; justify-content: flex-end; gap: 5px; margin-top: -15px; }
.btn { height: 41px; border: 0; border-radius: 2px; color: #fff; font: 500 16.500px/24px Inter, sans-serif; padding: 0 0 3px; }
.save { width: 91px; background: #25d5f2; }
.cancel { width: 72px; background: #ef172c; }
.scrollbar { width: 21px; background: #f1f1f1; display: flex; flex-direction: column; align-items: center; }
.thumb { width: 17px; height: 588px; background: #c1c1c1; margin: 6px 0 auto; }
.arrow { border: 5px solid transparent; }
.up { border-bottom-color: #a3a3a3; border-top: 0; margin-top: 9px; height: 6px; }
.down { border-top-color: #505050; border-bottom: 0; margin-bottom: 9px; }

/* download shelf */
.downloads { height: 72px; flex: none; display: flex; align-items: center; background: #3c3c3c; border-top: 1px solid #5a5a5a; border-bottom: 1px solid #4b4b4b; padding-right: 16px; font-family: "Open Sans", sans-serif; }
.dl { width: 296px; height: 55px; display: flex; align-items: center; padding: 0 22px 0 27px; border-right: 1px solid #5e5e5e; font-size: 15px; color: #c4c4c4; letter-spacing: .12px; }
.dl.last { width: 292px; padding: 0 22px; border-right: 2px solid #656565; }
.file { width: 16px; height: 20px; margin: -3px 18px 0 0; }
.chev { width: 12px; height: 8px; margin-left: auto; fill: none; stroke: #ccc; stroke-width: 1.900; }
.showall { margin: -2px 0 0 auto; width: 98px; height: 45px; border: 1px solid #0b76ad; border-radius: 23px; background: none; color: #a8c7fa; font: 600 14.500px/20px "Open Sans", sans-serif; letter-spacing: -.1px; padding: 0; }
.closedl { width: 12px; height: 12px; margin: -2px 0 0 15px; }

/* taskbar */
.taskbar { height: 59px; flex: none; display: flex; align-items: stretch; background: linear-gradient(90deg, #2a2418 0, #332316 130px, #2e2618 210px, #2a2719 420px, #2c2819 620px, #20262a 700px, #20252a 1180px, #2b2619 1340px, #2a261b 1400px, #3a231d 1540px, #34221e 1600px, #20262a 1680px, #1e2529 1920px); color: #fff; }
.weather { width: 168px; padding: 15px 0 0 13px; position: relative; }
.weather svg { width: 30px; height: 23px; }
.temp { position: absolute; left: 24px; top: 8px; height: 20px; padding: 0 4px; border-radius: 10px; background: #2b2d31; font: 14px/20px "Open Sans", sans-serif; letter-spacing: -.4px; }
.apps { display: flex; }
.app { width: 55px; display: flex; justify-content: center; align-items: center; position: relative; padding-bottom: 2px; }
.app svg { width: 36px; height: 36px; }
.app svg svg { width: 21px; height: 21px; }
.run::after { content: ""; position: absolute; left: 23.500px; bottom: 6px; width: 8px; height: 4px; border-radius: 2px; background: #999; }
.active::before { content: ""; position: absolute; left: 2.500px; top: 4px; width: 50px; height: 50px; border-radius: 5px; background: rgba(255, 255, 255, .07); border: 1px solid rgba(255, 255, 255, .05); }
.active::after { left: 17.500px; width: 20px; background: #f57e62; }
.count { position: absolute; font: 13px/17px "Open Sans", sans-serif; }
.red { left: 29px; top: 14px; width: 20px; height: 14px; line-height: 14px; border-radius: 4px; background: #f0433a; text-align: center; font-size: 11.500px; letter-spacing: -.5px; }
.coral { left: 27px; top: 8px; width: 22px; height: 20px; line-height: 20px; border-radius: 10px; background: #f57e62; color: #111; text-align: center; }
.zoomword { position: absolute; font: 700 8px/12px "Open Sans", sans-serif; }
.word { position: absolute; left: 14px; top: 20px; width: 13px; text-align: center; font: 700 12px/16px "Open Sans", sans-serif; }
.epic { position: absolute; top: 15px; text-align: center; font: 700 5px/6px "Liberation Sans", sans-serif; }
.epic b { display: block; font-size: 14px; line-height: 15px; transform: scaleX(.6); margin: 0 -10px; }
.tray { flex: 1; display: flex; align-items: center; padding: 0 0 2px 22px; }
.tray svg { width: 24px; height: 24px; }
.tray .t2, .tray .t3, .tray .t4 { margin-left: 16px; }
.tray .t5 { margin-left: 5px; }
.tray .t6 { margin-left: 7px; }
.clock { margin-left: auto; display: flex; flex-direction: column; align-items: flex-end; font: 15px/19.500px "Open Sans", sans-serif; letter-spacing: -.2px; }
.date { letter-spacing: -.05px; }
.tray .t7 { margin: 0 20px 0 10px; }
```
